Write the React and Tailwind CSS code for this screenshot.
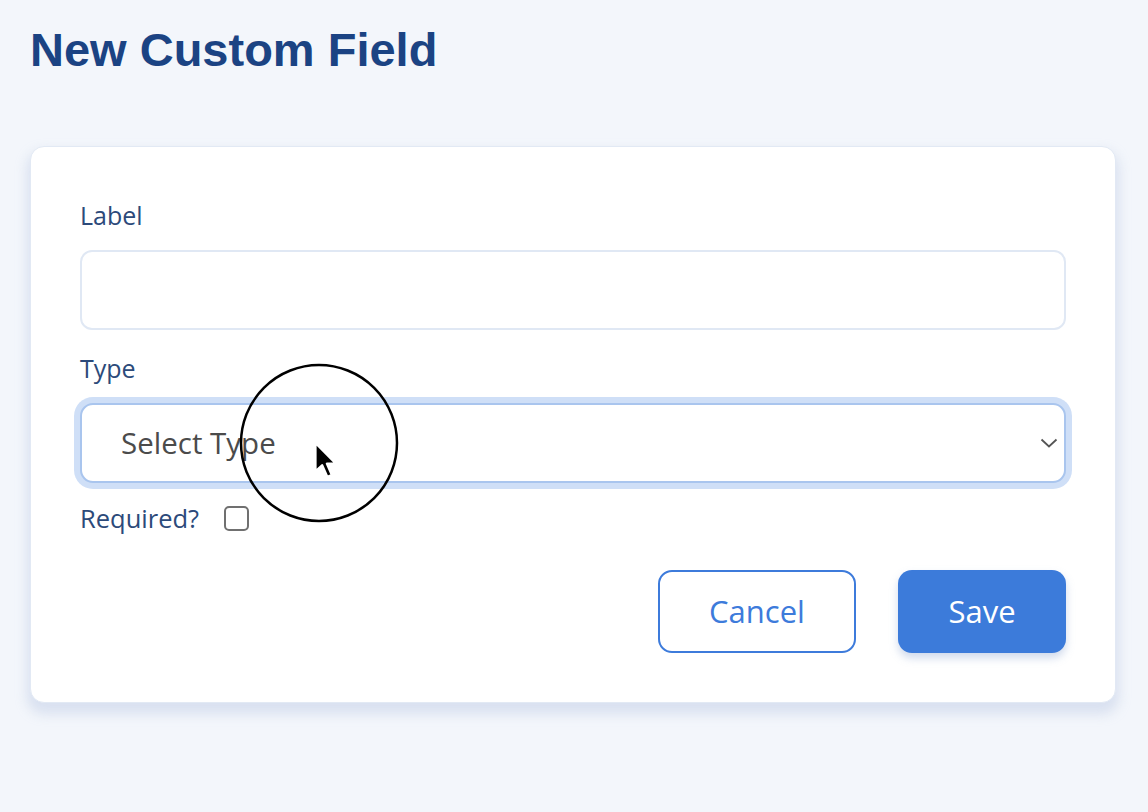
import React from "react";

export default function App() {
  const body = { fontFamily: '"Open Sans", "Noto Sans", sans-serif' };
  return (
    <div className="min-h-[812px] w-full bg-[#f3f6fb] pl-[30px] pr-[32px] pt-[26px] relative overflow-hidden" style={body}>
      <h1
        className="text-[47px] leading-none font-bold text-[#1b4383]"
        style={{ fontFamily: '"Liberation Sans", Arial, sans-serif' }}
      >
        New Custom Field
      </h1>

      <div className="mt-[73px] bg-white border border-[#e2e9f4] rounded-[14px] shadow-[0_8px_12px_3px_rgba(208,218,236,0.75)] px-[49px] pt-[52px] pb-[49px]">
        <div className="text-[25px] leading-[32px] text-[#2c4a7a]">Label</div>
        <div className="mt-[19px] h-[80px] rounded-[12px] border-2 border-[#e0e8f4] bg-white" />

        <div className="mt-[22px] text-[25px] leading-[32px] text-[#2c4a7a]">Type</div>
        <div className="mt-[19px] h-[80px] rounded-[13px] border-2 border-[#a9c5ee] bg-white shadow-[0_0_0_6px_#cfdff7] flex items-center justify-between pl-[39px] pr-[6px]">
          <span className="text-[29.5px] text-[#4b4b4b]">Select Type</span>
          <svg width="18" height="12" viewBox="0 0 18 12">
            <path d="M1.5 2.5 L9 9.5 L16.5 2.5" fill="none" stroke="#555" strokeWidth="1.8" />
          </svg>
        </div>

        <div className="mt-[19px] flex items-center">
          <span className="text-[25.5px] leading-[32px] text-[#2c4a7a]">Required?</span>
          <span className="ml-[25px] w-[25px] h-[25px] rounded-[5px] border-2 border-[#707070] bg-white" />
        </div>

        <div className="mt-[36px] flex justify-end gap-[42px]">
          <button className="w-[198px] h-[83px] rounded-[14px] border-2 border-[#3d7bdb] bg-white text-[31px] text-[#3d7bdb]">
            Cancel
          </button>
          <button className="w-[168px] h-[83px] rounded-[14px] bg-[#3c7bda] text-[31px] text-white shadow-[0_5px_8px_rgba(120,150,200,0.35)]">
            Save
          </button>
        </div>
      </div>

      <svg className="absolute pointer-events-none" style={{ left: 238, top: 363 }} width="162" height="162" viewBox="0 0 162 162">
        <circle cx="81" cy="80" r="78" fill="none" stroke="#000" strokeWidth="2.5" />
      </svg>
      <svg className="absolute pointer-events-none" style={{ left: 311, top: 440 }} width="27" height="40" viewBox="0 0 12 18">
        <path d="M2 1.5 L2 14 L5 11.3 L7.3 16.5 L9.2 15.7 L7 10.6 L11 10.6 Z" fill="#000" stroke="#fff" strokeWidth="0.9" strokeLinejoin="round" />
      </svg>
    </div>
  );
}
